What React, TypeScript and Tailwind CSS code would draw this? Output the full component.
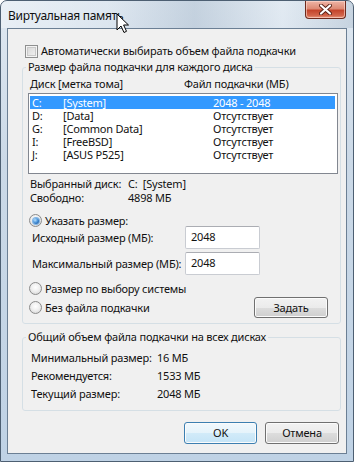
import React from "react";

function Radio({ checked }: { checked?: boolean }) {
  return (
    <div className="w-[13px] h-[13px] shrink-0 rounded-full border border-[#8b8b8b] bg-[radial-gradient(circle_at_50%_40%,#ffffff_0%,#f0f0f0_45%,#cfcfcf_100%)] flex items-center justify-center">
      {checked && (
        <div className="w-[6px] h-[6px] rounded-full bg-[radial-gradient(circle_at_35%_35%,#b4e0ff_0%,#3a86d1_55%,#123e7a_100%)] shadow-[0_0_0_1px_#7fb4e6]" />
      )}
    </div>
  );
}

function Button({ label, primary, w }: { label: string; primary?: boolean; w: string }) {
  return (
    <div
      className={
        "h-full flex items-center justify-center rounded-[3px] border shadow-[inset_0_0_0_1px_#fbfbfb] " +
        w +
        " " +
        (primary
          ? "border-[#3c7fb1] bg-[linear-gradient(#f1f8fd_0%,#e5f3fb_50%,#d2ebf9_50%,#c4e4f7_100%)]"
          : "border-[#707070] bg-[linear-gradient(#f2f2f2_0%,#ebebeb_50%,#dddddd_50%,#cfcfcf_100%)]")
      }
    >
      {label}
    </div>
  );
}

const drives = [
  ["C:", "[System]", "2048 - 2048"],
  ["D:", "[Data]", "Отсутствует"],
  ["G:", "[Common Data]", "Отсутствует"],
  ["I:", "[FreeBSD]", "Отсутствует"],
  ["J:", "[ASUS P525]", "Отсутствует"],
];

const totals = [
  ["Минимальный размер:", "16 МБ"],
  ["Рекомендуется:", "1533 МБ"],
  ["Текущий размер:", "2048 МБ"],
];

export default function App() {
  return (
    <div className="relative w-[354px] h-[462px] overflow-hidden flex flex-col border border-[#4d5f72] rounded-t-[7px] bg-[linear-gradient(180deg,#dfe8f1_0%,#cbd9e7_35%,#bfd2e5_100%)] font-['Noto_Sans',sans-serif] text-[11px] tracking-[-0.2px] leading-[14px] text-[#111]">
      {/* title bar */}
      <div className="h-[27px] shrink-0 flex items-start bg-[linear-gradient(90deg,rgba(255,255,255,0.35)_0%,rgba(255,255,255,0)_30%,rgba(120,145,170,0.25)_55%,rgba(255,255,255,0.1)_80%,rgba(110,135,160,0.2)_100%)]">
        <div className="pl-[7px] pt-[8px] text-[12px] tracking-[-0.3px] text-[#101010]">Виртуальная память</div>
        <div className="ml-auto mr-[7px] w-[41px] h-[18px] rounded-b-[4px] border border-t-0 border-[#6e2a1d] bg-[linear-gradient(#efb5a6_0%,#dd8a75_45%,#c4452c_55%,#d2654b_85%,#e99a7f_100%)] shadow-[inset_0_0_0_1px_rgba(255,220,210,0.6)] flex items-center justify-center">
          <svg width="13" height="11" viewBox="0 0 13 11">
            <path d="M2 1.5 L11 9.5 M11 1.5 L2 9.5" stroke="#5a2318" strokeWidth="4" strokeLinecap="round" />
            <path d="M2 1.5 L11 9.5 M11 1.5 L2 9.5" stroke="#ffffff" strokeWidth="2.2" strokeLinecap="round" />
          </svg>
        </div>
      </div>

      {/* client area */}
      <div className="ml-[6px] w-[340px] h-[426px] shrink-0 border border-[#6b7f94] bg-[#f0f0f0] flex flex-col">
        {/* auto checkbox */}
        <div className="mt-[15px] h-[14px] flex items-center pl-[17px]">
          <div className="w-[13px] h-[13px] shrink-0 border border-[#8e8f8f] bg-[linear-gradient(135deg,#d4d4d4_0%,#f4f4f4_100%)] shadow-[inset_0_0_0_1px_#f4f4f4,inset_0_0_0_2px_#c9c9c9]" />
          <span className="ml-[3px]">Автоматически выбирать объем файла подкачки</span>
        </div>

        {/* group 1 */}
        <fieldset className="mt-[2px] ml-[14px] w-[319px] border border-[#d5dfe5] rounded-[3px] pb-[5px] flex flex-col">
          <legend className="ml-[3px] px-[2px] h-[14px] leading-[14px]">Размер файла подкачки для каждого диска</legend>
          <div className="mt-[3px] h-[14px] grid grid-cols-[154px_1fr] pl-[7px]">
            <span>Диск [метка тома]</span>
            <span>Файл подкачки (МБ)</span>
          </div>
          <div className="mt-[2px] ml-[5px] w-[310px] h-[81px] border border-[#828790] bg-white pt-[2px] pl-[1px] pr-[2px] flex flex-col">
            {drives.map((d, i) => (
              <div
                key={d[0]}
                className={
                  "h-[13px] grid grid-cols-[31px_150px_1fr] items-center pl-[2px] leading-[13px] " +
                  (i === 0 ? "bg-[#3399ff] text-white" : "")
                }
              >
                <span>{d[0]}</span>
                <span>{d[1]}</span>
                <span>{d[2]}</span>
              </div>
            ))}
          </div>
          <div className="mt-[3px] h-[14px] grid grid-cols-[98px_1fr] pl-[7px]">
            <span>Выбранный диск:</span>
            <span>C:&nbsp;&nbsp;[System]</span>
          </div>
          <div className="h-[14px] grid grid-cols-[98px_1fr] pl-[7px]">
            <span>Свободно:</span>
            <span>4898 МБ</span>
          </div>
          <div className="mt-[10px] h-[11px] flex items-center pl-[6px]">
            <Radio checked />
            <span className="ml-[3px]">Указать размер:</span>
          </div>
          <div className="h-[23px] flex items-start">
            <span className="w-[162px] shrink-0 pl-[9px] pt-[5px]">Исходный размер (МБ):</span>
            <div className="w-[75px] h-[23px] border border-[#c9ccd2] border-t-[#abadb3] rounded-[2px] bg-white pl-[5px] pt-[3px]">2048</div>
          </div>
          <div className="mt-[3px] h-[23px] flex items-start">
            <span className="w-[162px] shrink-0 pl-[9px] pt-[5px]">Максимальный размер (МБ):</span>
            <div className="w-[75px] h-[23px] border border-[#c9ccd2] border-t-[#abadb3] rounded-[2px] bg-white pl-[5px] pt-[3px]">2048</div>
          </div>
          <div className="mt-[7px] h-[13px] flex items-center pl-[6px]">
            <Radio />
            <span className="ml-[3px]">Размер по выбору системы</span>
          </div>
          <div className="mt-[2px] h-[21px] flex items-center pl-[6px]">
            <Radio />
            <span className="ml-[3px]">Без файла подкачки</span>
            <div className="ml-auto mr-[12px] h-[21px] flex">
              <Button label="Задать" w="w-[74px]" />
            </div>
          </div>
        </fieldset>

        {/* group 2 */}
        <fieldset className="mt-[6px] ml-[14px] w-[319px] border border-[#d5dfe5] rounded-[3px] pt-[7px] pb-[9px] flex flex-col gap-[4px]">
          <legend className="ml-[3px] px-[2px] h-[14px] leading-[14px]">Общий объем файла подкачки на всех дисках</legend>
          {totals.map((t) => (
            <div key={t[0]} className="h-[14px] grid grid-cols-[126px_1fr] pl-[8px]">
              <span>{t[0]}</span>
              <span>{t[1]}</span>
            </div>
          ))}
        </fieldset>

        {/* buttons */}
        <div className="mt-[11px] h-[22px] flex justify-end gap-[8px] mr-[7px]">
          <Button label="OK" primary w="w-[73px]" />
          <Button label="Отмена" w="w-[74px]" />
        </div>
      </div>

      {/* mouse cursor */}
      <svg className="absolute left-[115px] top-[12px]" width="14" height="21" viewBox="0 0 14 21">
        <path d="M1 1 L1 17 L5 13 L8 19.5 L10.5 18.3 L7.6 12 L12.5 12 Z" fill="#ffffff" stroke="#000000" strokeWidth="1" strokeLinejoin="miter" />
      </svg>
    </div>
  );
}
